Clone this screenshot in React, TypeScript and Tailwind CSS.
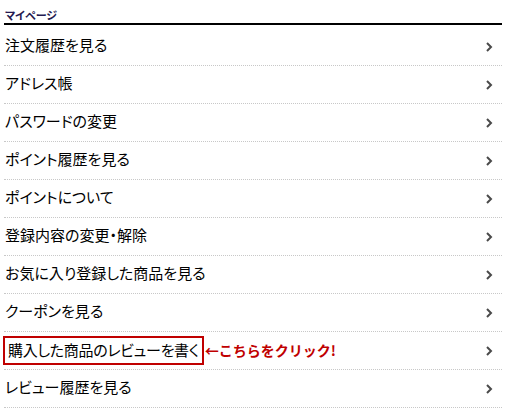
const items = [
  "注文履歴を見る",
  "アドレス帳",
  "パスワードの変更",
  "ポイント履歴を見る",
  "ポイントについて",
  "登録内容の変更・解除",
  "お気に入り登録した商品を見る",
  "クーポンを見る",
  "購入した商品のレビューを書く",
  "レビュー履歴を見る",
];

const FONT = "font-['Noto_Sans_CJK_JP','Noto_Sans',sans-serif]";
const PALT = "[font-feature-settings:'palt']";

function Chevron() {
  return (
    <svg width="8" height="10" viewBox="0 0 8 10" className="shrink-0">
      <polyline points="2,1 6,5 2,9" fill="none" stroke="#4a4a4a" strokeWidth="2" />
    </svg>
  );
}

export default function App() {
  return (
    <div className={`w-[506px] h-[413px] bg-white px-[4px] pt-[8px] overflow-hidden ${FONT}`}>
      <h2 className={`text-[11px] leading-[15px] font-bold text-[#241a50] pl-[1px] border-b-2 border-black ${PALT}`}>
        マイページ
      </h2>
      <ul className="pt-[3px]">
        {items.map((label, i) => {
          const review = i === 8;
          return (
            <li
              key={label}
              className="h-[38px] flex items-center border-b border-dotted border-[#c8c8c8] pr-[9px]"
            >
              <div className="flex-1 flex items-center">
                {review ? (
                  <>
                    <span className={`h-[29px] border-2 border-[#c00000] px-[3px] flex items-center -ml-[1px] ${PALT}`}>
                      <span className="text-[15px] text-black leading-none tracking-[-0.3px] mb-[3px]">{label}</span>
                    </span>
                    <span className="ml-[1px] text-[14px] font-bold text-[#c00000] leading-none mb-[2px]">
                      ←こちらをクリック!
                    </span>
                  </>
                ) : (
                  <span className={`pl-[1px] text-[15px] text-black leading-none mb-[4px] ${PALT}`}>{label}</span>
                )}
              </div>
              <Chevron />
            </li>
          );
        })}
      </ul>
    </div>
  );
}
